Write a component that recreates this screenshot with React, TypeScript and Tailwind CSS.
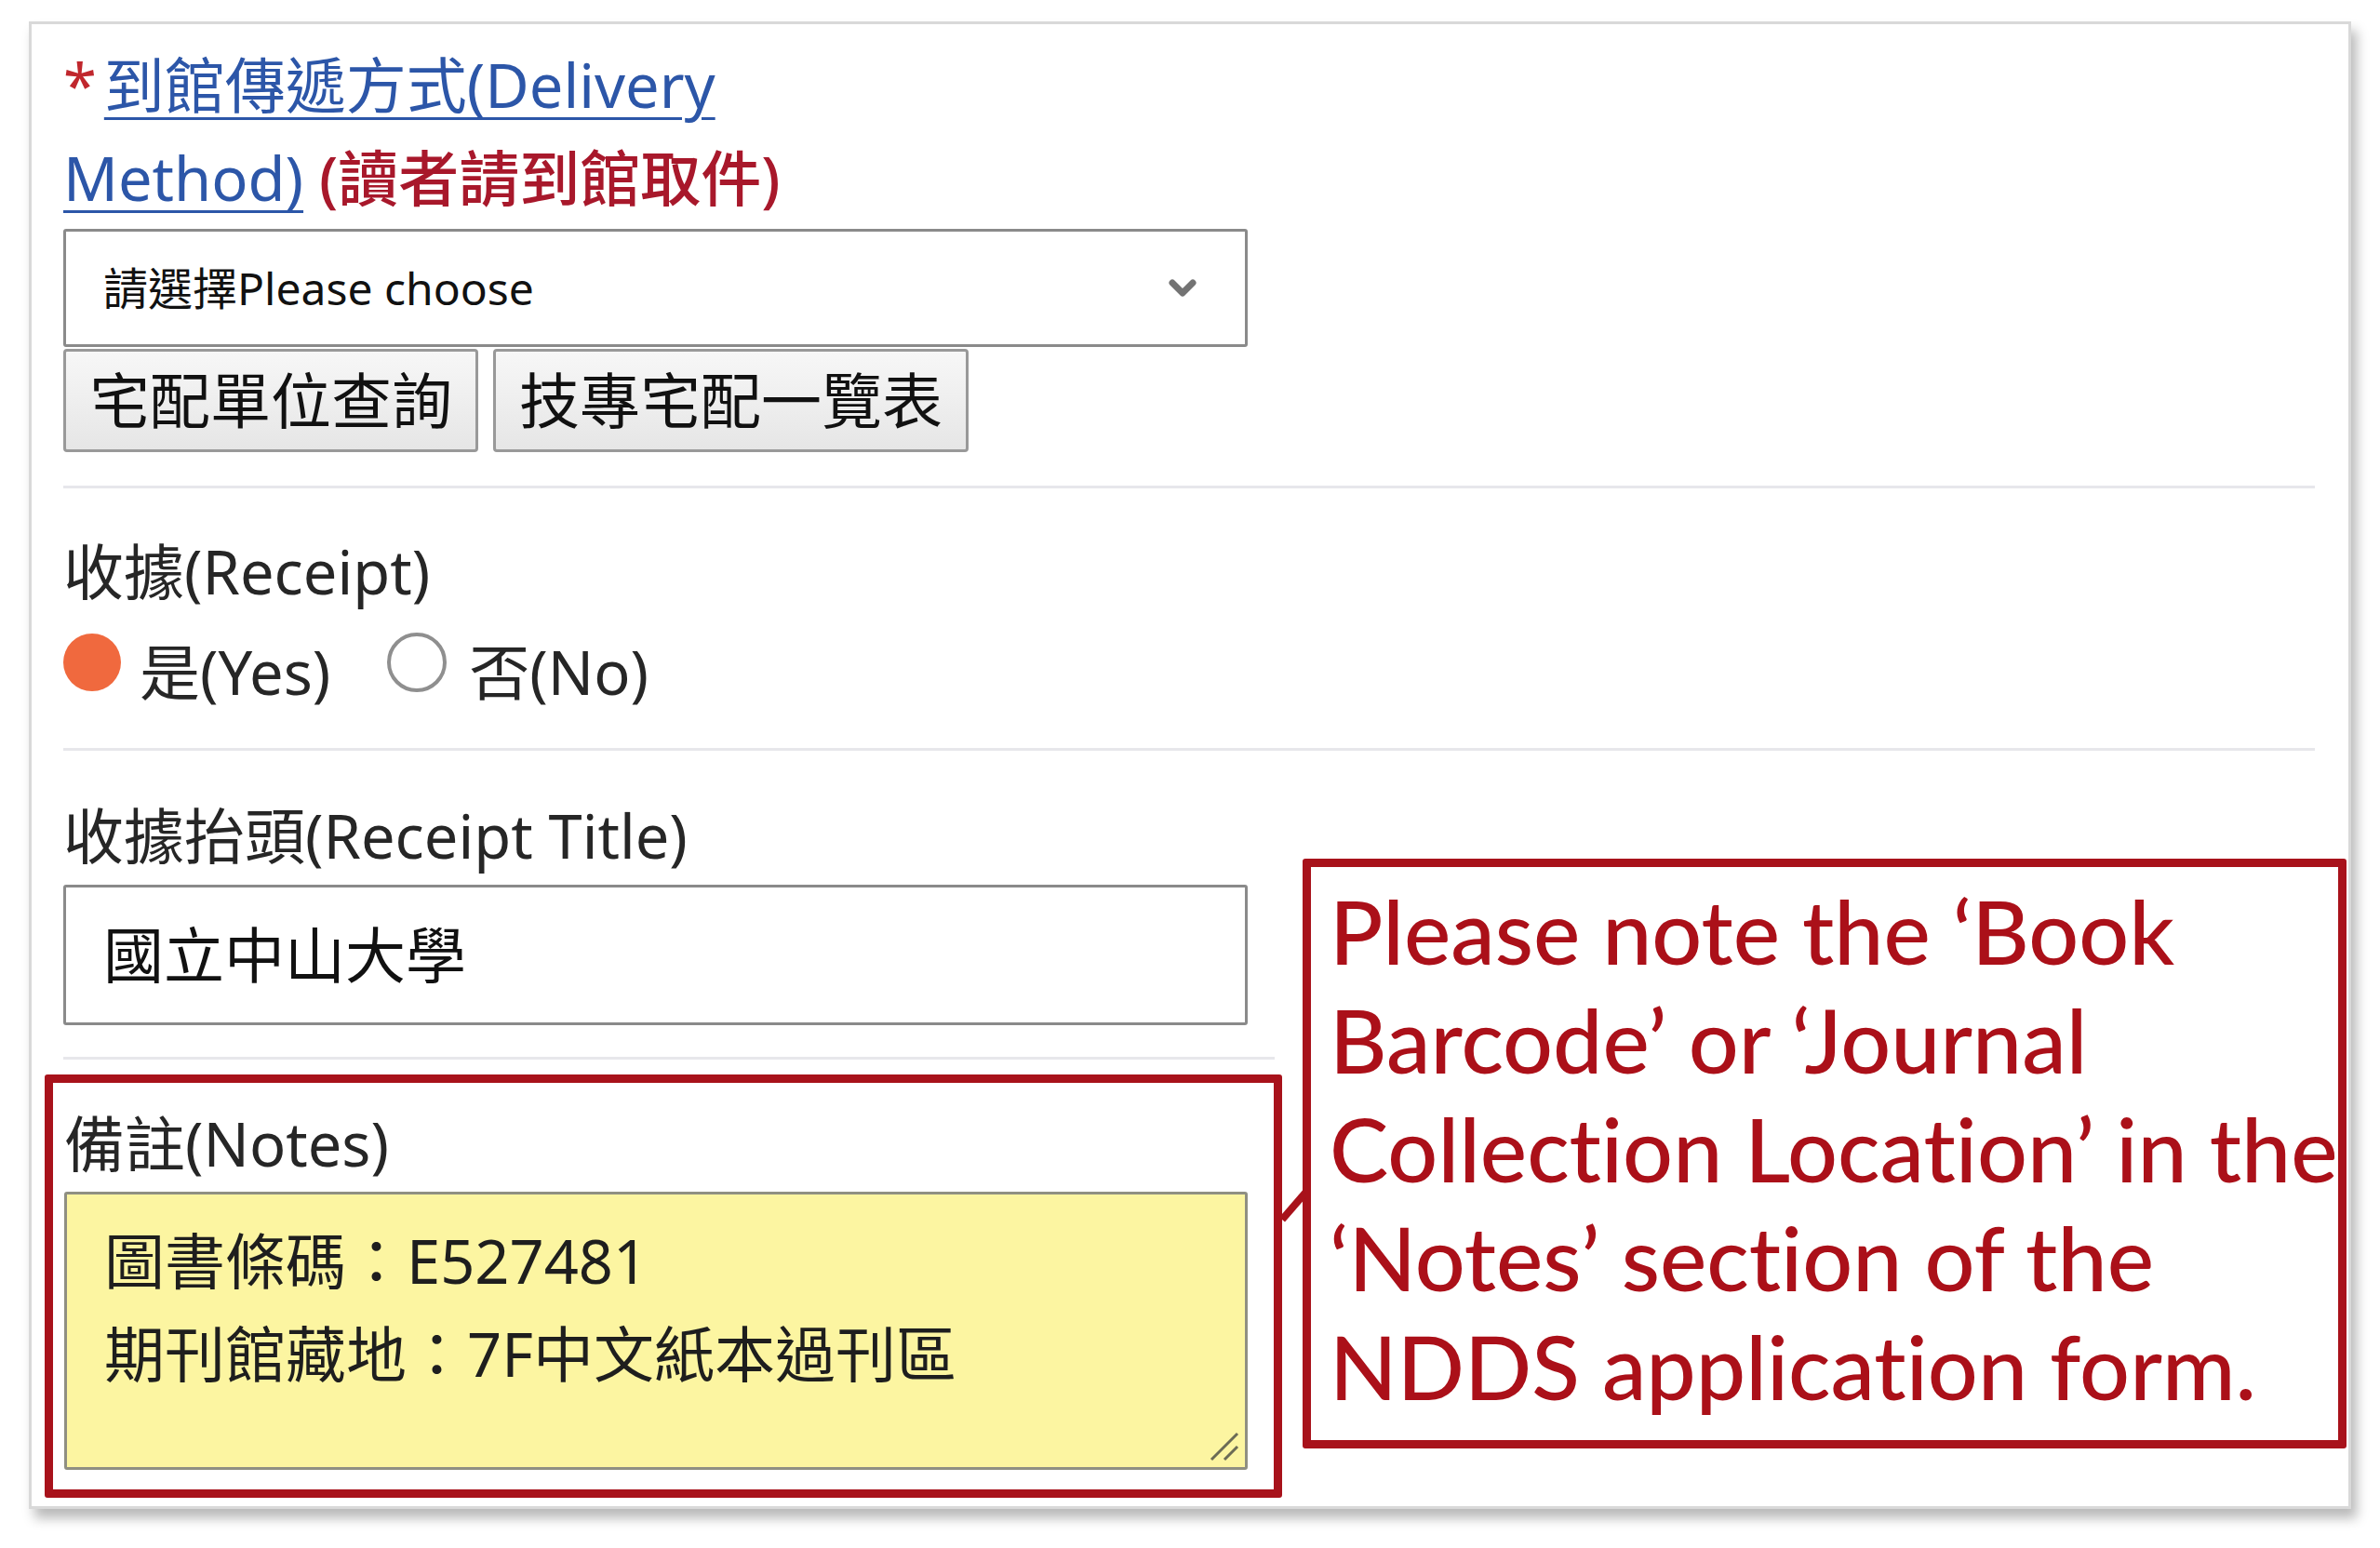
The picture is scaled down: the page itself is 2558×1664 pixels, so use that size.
import React from "react";

const Divider = ({ className = "" }: { className?: string }) => (
  <div className={`h-[3px] bg-[#e7e7eb] ${className}`} />
);

const Radio = ({ checked }: { checked: boolean }) =>
  checked ? (
    <span className="mb-[22px] block h-[62px] w-[62px] shrink-0 rounded-full bg-[#f0693e]" />
  ) : (
    <span className="mb-[22px] block h-[64px] w-[64px] shrink-0 rounded-full border-[4px] border-[#8f8f8f] bg-white" />
  );

const App = () => {
  return (
    <div className="h-[1664px] w-[2558px] overflow-hidden bg-white pl-[31px] pt-[23px] text-[65px] text-[#262626] [font-family:'Noto_Sans','Noto_Sans_CJK_TC',sans-serif]">
      <div className="relative h-[1599px] w-[2496px] border-[3px] border-[#d9d9d9] bg-white pl-[34px] pr-[36px] pt-[15px] shadow-[6px_10px_12px_rgba(0,0,0,0.28)]">
        {/* delivery method */}
        <div className="leading-[100px]">
          <span className="text-[#c0272d]">*</span>
          <span className="ml-[8px] text-[#2c56a8] underline decoration-[3px] underline-offset-[10px]">
            到館傳遞方式(Delivery
            <br />
            Method)
          </span>{" "}
          <span className="font-medium text-[#a8182b]">(讀者請到館取件)</span>
        </div>

        <div className="mt-[5px] flex h-[127px] w-[1273px] items-center justify-between rounded-[3px] border-[3px] border-[#8a8a8a] bg-white pl-[40px] pr-[52px]">
          <span className="text-[48px] text-[#111]">請選擇Please choose</span>
          <svg width="30" height="20" viewBox="0 0 30 20">
            <polyline
              points="4,4 15,15 26,4"
              fill="none"
              stroke="#737373"
              strokeWidth="7"
              strokeLinecap="round"
              strokeLinejoin="round"
            />
          </svg>
        </div>

        <div className="mt-[2px] flex gap-[16px]">
          {["宅配單位查詢", "技專宅配一覽表"].map((label) => (
            <button
              key={label}
              className="flex h-[111px] items-center rounded-[4px] border-[3px] border-[#999] bg-gradient-to-b from-[#f7f7f7] to-[#e6e6e6] px-[25px] leading-none text-[#111]"
            >
              {label}
            </button>
          ))}
        </div>

        <Divider className="mt-[36px]" />

        {/* receipt */}
        <div className="mt-[44px] leading-[90px]">收據(Receipt)</div>
        <div className="mt-[14px] flex h-[100px] items-center">
          <Radio checked />
          <span className="ml-[20px]">是(Yes)</span>
          <span className="ml-[61px]">
            <Radio checked={false} />
          </span>
          <span className="ml-[24px]">否(No)</span>
        </div>

        <Divider className="mt-[31px]" />

        {/* receipt title */}
        <div className="mt-[46px] leading-[90px]">收據抬頭(Receipt Title)</div>
        <div className="mt-[8px] flex h-[151px] w-[1273px] items-center rounded-[3px] border-[3px] border-[#8a8a8a] bg-white pl-[40px] text-[#111]">
          國立中山大學
        </div>

        <Divider className="mt-[34px] w-[1302px]" />

        {/* notes */}
        <div className="-ml-[20px] mt-[16px] h-[455px] w-[1330px] rounded-[3px] border-[9px] border-[#a8121b] pl-[12px] pt-[20px]">
          <div className="leading-[90px]">備註(Notes)</div>
          <div className="relative mt-[7px] h-[299px] w-[1272px] rounded-[3px] border-[3px] border-[#8f8f82] bg-[#fcf5a1] pl-[40px] pt-[21px] leading-[100px] text-[#1e1e1e]">
            <div>圖書條碼：E527481</div>
            <div>期刊館藏地：7F中文紙本過刊區</div>
            <svg
              className="absolute bottom-[6px] right-[6px]"
              width="32"
              height="32"
              viewBox="0 0 32 32"
            >
              <line x1="30" y1="2" x2="2" y2="30" stroke="#6b6b55" strokeWidth="3" />
              <line x1="30" y1="16" x2="16" y2="30" stroke="#6b6b55" strokeWidth="3" />
            </svg>
          </div>
        </div>

        {/* callout */}
        <div className="absolute left-[1366px] top-[897px] h-[634px] w-[1122px] rounded-[3px] border-[9px] border-[#a8121b] bg-white pl-[20px] pt-[10px] text-[95px] font-medium leading-[117px] whitespace-nowrap text-[#ab1019] [font-family:Lato,'Noto_Sans',sans-serif] [font-variant-ligatures:none]">
          Please note the ‘Book
          <br />
          Barcode’ or ‘Journal
          <br />
          Collection Location’ in the
          <br />
          ‘Notes’ section of the
          <br />
          NDDS application form.
          <svg
            className="absolute -left-[33px] top-[346px]"
            width="28"
            height="36"
            viewBox="0 0 28 36"
          >
            <line x1="27" y1="4" x2="2" y2="33" stroke="#a8121b" strokeWidth="8" />
          </svg>
        </div>
      </div>
    </div>
  );
};

export default App;
